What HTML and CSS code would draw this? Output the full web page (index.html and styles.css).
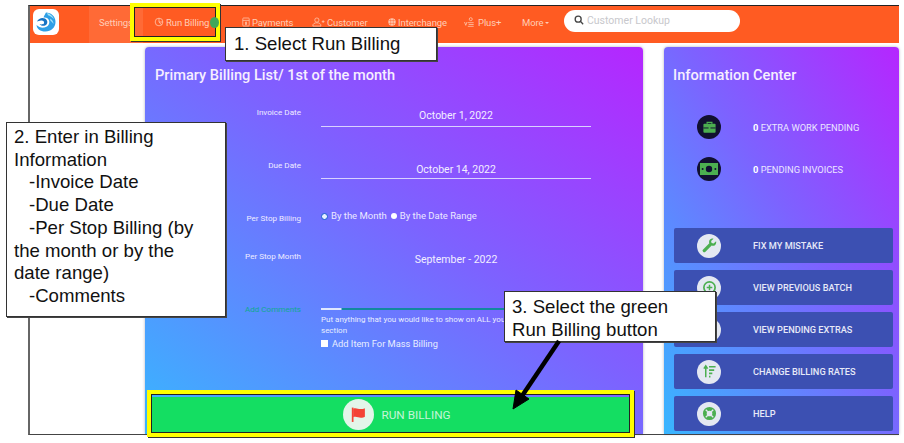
FILE: index.html
```html
<!DOCTYPE html>
<html lang="en">
<head>
<meta charset="UTF-8">
<meta name="viewport" content="width=device-width, initial-scale=1.0">
<title>Run Billing</title>
<link rel="stylesheet" href="styles.css">
</head>
<body>
<div class="frame">
    <header class="topbar">
        <div class="logo">
            <svg viewBox="0 0 26 26" width="26" height="26">
                <rect width="26" height="26" rx="6" fill="#fff"/>
                <path d="M13 3.500c5 0 9.500 4 9.500 9.500S18 22.500 12.500 22.500 4 20 3.500 16c2 2 5 3 8 2.500 4-.7 5.500-4 4.500-7-.7-2.500-3-3.500-5.500-3 1-2.500 2-4 2.500-5z" fill="#2f9fe6"/>
                <path d="M4 12.500c1.500-3 5-4.500 8-3 2.500 1.200 3 4 1.500 6-1.500 1.800-5 2-7-.5 2 .7 4 .5 4.500-.8.600-1.700-1-3-3-2.700-1.600.2-3 .5-4 1z" fill="#1673c4"/>
                <path d="M14 4c3 .5 6 3 7 6.500-2-2.500-4-3.500-6-4.200zM17 9.500c2 1 3.500 3 3.500 5.500-1-1.500-2-2.500-3-3.200z" fill="#a5e6f8"/>
            </svg>
        </div>
        <nav class="nav">
            <a class="nav-item nav-settings">Settings</a>
            <a class="nav-item nav-billing">
                <svg class="nav-icon" viewBox="0 0 12 12"><circle cx="6" cy="6" r="4.600"/><path d="M6 6V1.400M6 6h4.600M6 6l3 3.400"/></svg>
                Run Billing
            </a>
            <a class="nav-item nav-payments">
                <svg class="nav-icon nav-icon-narrow" viewBox="0 0 10 12"><rect x="1" y="1" width="8" height="10" rx="1"/><path d="M1 4h8M5 5.500v4.500M6.400 6.400H4.200v1.300h1.600v1.100H3.700"/></svg>
                Payments
            </a>
            <a class="nav-item nav-customer">
                <svg class="nav-icon nav-icon-wide" viewBox="0 0 16 12"><circle cx="6" cy="3.600" r="2.600"/><path d="M1 11c0-3 2-4 5-4s5 1 5 4zM12 5.500h3.400M13.700 3.800v3.400"/></svg>
                Customer
            </a>
            <a class="nav-item nav-interchange">
                <svg class="nav-icon nav-icon-narrow nav-icon-solid" viewBox="0 0 10 12"><circle cx="5" cy="6" r="4.600" stroke="none"/><path d="M.8 4.300h8.400M.8 7.700h8.400M3.400 1.500v9M6.600 1.500v9" stroke="#ff5b22" stroke-width="0.600"/></svg>
                Interchange
            </a>
            <a class="nav-item nav-plus">
                <svg class="nav-icon nav-icon-wide" viewBox="0 0 14 12"><circle cx="8.500" cy="2.600" r="1.800"/><path d="M5 6.800h7M6 9h6M5 11.200h7M1 6l1.500 4L4 6"/></svg>
                Plus+
            </a>
            <a class="nav-item nav-more">More <span class="caret"></span></a>
        </nav>
        <div class="search">
            <svg viewBox="0 0 12 12" width="10" height="10"><circle cx="5" cy="5" r="3.600"/><path d="M7.600 7.600L11 11"/></svg>
            <span>Customer Lookup</span>
        </div>
    </header>

    <div class="content">
        <section class="card billing">
            <h2 class="card-title">Primary Billing List/ 1st of the month</h2>

            <div class="row row-invoice">
                <label class="row-label">Invoice Date</label>
                <div class="field">October 1, 2022</div>
            </div>
            <div class="row row-due">
                <label class="row-label">Due Date</label>
                <div class="field">October 14, 2022</div>
            </div>
            <div class="row row-stop">
                <label class="row-label">Per Stop Billing</label>
                <div class="radios">
                    <span class="radio radio-on"></span>By the Month
                    <span class="radio"></span>By the Date Range
                </div>
            </div>
            <div class="row row-month">
                <label class="row-label">Per Stop Month</label>
                <div class="field field-plain">September - 2022</div>
            </div>
            <div class="row row-comments">
                <label class="row-label label-teal">Add Comments</label>
                <div class="comments">
                    <div class="comment-line"></div>
                    <p class="hint">Put anything that you would like to show on ALL your invoices in this<br>section</p>
                    <div class="mass"><span class="check"></span>Add Item For Mass Billing</div>
                </div>
            </div>

            <button class="run-btn">
                <span class="run-icon">
                    <svg viewBox="0 0 16 16" width="17" height="17"><path d="M2.500 1.500v13.500" stroke="#f44336" stroke-width="1.600"/><path d="M3 2.500c3-1.400 5 1 8 .3 1.300-.2 2.500-.6 3-.8v8c-1 .6-2.400 1-3.600 1-2.600.1-4.600-1.800-7.400-.5z" fill="#f44336"/></svg>
                </span>
                RUN BILLING
            </button>
        </section>

        <aside class="card info">
            <h2 class="card-title">Information Center</h2>

            <div class="stat stat-first">
                <span class="stat-icon">
                    <svg viewBox="0 0 16 16" width="15" height="15"><path d="M5.500 4V2.500h5V4" fill="none" stroke="#4caf50" stroke-width="1.400"/><rect x="1.500" y="4" width="13" height="9.500" rx="1" fill="#4caf50"/><rect x="1.500" y="8" width="13" height="1" fill="#101030"/><rect x="7" y="7.300" width="2" height="2.400" fill="#4caf50"/></svg>
                </span>
                <span class="stat-text"><b>0</b> EXTRA WORK PENDING</span>
            </div>
            <div class="stat">
                <span class="stat-icon">
                    <svg viewBox="0 0 18 14" width="18" height="14"><rect y="1" width="18" height="12" fill="#4caf50"/><circle cx="9" cy="7" r="3.200" fill="#101030"/><circle cx="2.600" cy="7" r="1" fill="#101030"/><circle cx="15.400" cy="7" r="1" fill="#101030"/></svg>
                </span>
                <span class="stat-text"><b>0</b> PENDING INVOICES</span>
            </div>

            <div class="actions">
                <a class="action">
                    <span class="action-icon">
                        <svg viewBox="0 0 16 16" width="15" height="15"><path d="M15 3.500l-2.600 2.400-2.200-.5-.5-2.200L12.300.8C10 0 7.500 1.500 7.500 4.200c0 .5.100 1 .3 1.400L1.200 12.200a1.700 1.700 0 0 0 2.500 2.500l6.600-6.600c2.800 1 5.600-1.400 4.700-4.600z" fill="#4caf50"/></svg>
                    </span>
                    FIX MY MISTAKE
                </a>
                <a class="action">
                    <span class="action-icon">
                        <svg viewBox="0 0 16 16" width="15" height="15"><circle cx="8" cy="8" r="6" fill="none" stroke="#4caf50" stroke-width="1.800"/><path d="M8 5v6M5 8h6" stroke="#4caf50" stroke-width="1.600"/></svg>
                    </span>
                    VIEW PREVIOUS BATCH
                </a>
                <a class="action">
                    <span class="action-icon"></span>
                    VIEW PENDING EXTRAS
                </a>
                <a class="action">
                    <span class="action-icon">
                        <svg viewBox="0 0 16 16" width="15" height="15"><path d="M4 14V3M2 5l2-3 2 3" fill="none" stroke="#4caf50" stroke-width="1.600"/><path d="M7.500 3h7M7.500 6.500h5.500M7.500 10h3.500M7.500 13.500h1.500" stroke="#4caf50" stroke-width="1.700"/></svg>
                    </span>
                    CHANGE BILLING RATES
                </a>
                <a class="action">
                    <span class="action-icon">
                        <svg viewBox="0 0 16 16" width="15" height="15"><circle cx="8" cy="8" r="5" fill="none" stroke="#4caf50" stroke-width="4"/><path d="M4 4l2.200 2.200M12 4L9.800 6.200M4 12l2.200-2.200M12 12L9.800 9.800" stroke="#e4e8f2" stroke-width="1.400"/></svg>
                    </span>
                    HELP
                </a>
            </div>
        </aside>
    </div>
</div>

<!-- annotations drawn on top of the screenshot -->
<div class="hl hl-nav"><span class="hl-dot"></span></div>
<div class="hl hl-btn"></div>
<div class="note note-1">1. Select Run Billing</div>
<div class="note note-2">
    2. Enter in Billing Information<br>
    <span class="sub">-Invoice Date</span><br>
    <span class="sub">-Due Date</span><br>
    <span class="sub">-Per Stop Billing (by</span> the month or by the date range)<br>
    <span class="sub">-Comments</span>
</div>
<div class="note note-3">3. Select the green<br>Run Billing button</div>
<svg class="arrow" viewBox="0 0 904 443" width="904" height="443">
    <path d="M559 341L522 396" stroke="#000" stroke-width="4.500"/>
    <path d="M513 409L516 390L529 399z" fill="#000" stroke="#000" stroke-width="1"/>
</svg>
</body>
</html>
```

FILE: styles.css
```css
* {
    box-sizing: border-box;
}
body {
    margin: 0;
    width: 904px;
    height: 443px;
    overflow: hidden;
    background: #fff;
    font-family: Roboto, "Liberation Sans", sans-serif;
    position: relative;
}
.frame {
    margin: 5px 0 0 28px;
    width: 871px;
    height: 430px;
    border-top: 1px solid #222;
    border-left: 2px solid #666;
    border-bottom: 1px solid #444;
    display: flex;
    flex-direction: column;
}

/* top bar */
.topbar {
    height: 37px;
    flex: none;
    background: #ff5b22;
    display: flex;
    align-items: flex-start;
    color: #ffcdb6;
}
.logo {
    width: 59px;
    padding: 3px 0 0 3px;
    height: 37px;
}
.logo svg {
    display: block;
}
.nav {
    display: flex;
    height: 37px;
    font-size: 9.500px;
    letter-spacing: -0.1px;
}
.nav-item {
    display: flex;
    align-items: center;
    gap: 2px;
    padding-bottom: 5px;
    white-space: nowrap;
}
.nav-settings {
    width: 54px;
    padding-left: 10px;
    background: #ff6a36;
}
.nav-billing {
    width: 97px;
    padding-left: 11px;
}
.nav-payments {
    width: 72px;
}
.nav-customer {
    width: 74px;
}
.nav-interchange {
    width: 77px;
}
.nav-plus {
    width: 59px;
}
.nav-more {
    width: 42px;
}
.nav-icon {
    width: 10px;
    height: 10px;
    fill: none;
    stroke: #ffcdb6;
    stroke-width: 0.900;
}
.nav-icon-wide {
    width: 13px;
}
.nav-icon-narrow {
    width: 8px;
    margin-left: 2px;
}
.nav-icon-solid {
    fill: #ffcdb6;
}
.caret {
    width: 0;
    height: 0;
    margin-top: 2px;
    border-left: 2.500px solid transparent;
    border-right: 2.500px solid transparent;
    border-top: 2.500px solid #ffcdb6;
}
.search {
    width: 176px;
    height: 22px;
    margin: 4px 0 0 0;
    background: #fff;
    border-radius: 11px;
    display: flex;
    align-items: center;
    gap: 3px;
    padding-left: 10px;
    padding-bottom: 2px;
    font-size: 10.500px;
    color: #c8c8cc;
}
.search svg {
    fill: none;
    stroke: #444;
    stroke-width: 1.600;
}

/* cards */
.content {
    flex: 1;
    min-height: 0;
    display: flex;
    padding: 4px 0 0 115px;
    gap: 21px;
}
.card {
    background: linear-gradient(to top right, #38b6ff, #7d62ff 55%, #b526ff);
    border-radius: 4px 4px 0 0;
    color: #fff;
    box-shadow: 0 0 3px rgba(60, 60, 90, 0.4);
    display: flex;
    flex-direction: column;
}
.billing {
    width: 498px;
}
.info {
    width: 235px;
}
.card-title {
    margin: 20px 0 0 10px;
    font-size: 14.600px;
    line-height: 17px;
    font-weight: 500;
    color: #f6eeff;
}
.info .card-title {
    margin-left: 9px;
}

/* form rows */
.row {
    display: grid;
    grid-template-columns: 156px 270px;
    column-gap: 20px;
}
.row-label {
    text-align: right;
    font-size: 8.100px;
    color: #f0ecff;
    line-height: 10px;
}
.label-teal {
    color: #10a890;
}
.field {
    height: 22px;
    border-bottom: 1px solid #d9d2ff;
    text-align: center;
    font-size: 10.500px;
    line-height: 22px;
    color: #f2eeff;
}
.row-invoice {
    margin-top: 21px;
}
.row-invoice .row-label {
    margin-top: 2px;
}
.row-due {
    margin-top: 31px;
}
.row-due .row-label {
    margin-top: 2px;
}
.row-due .field {
    height: 21px;
    line-height: 23px;
}
.row-stop {
    margin-top: 30px;
}
.row-stop .row-label {
    margin-top: 4px;
}
.radios {
    font-size: 9.500px;
    line-height: 12px;
    color: #ece8ff;
    display: flex;
    align-items: center;
    gap: 3px;
}
.radio {
    width: 6px;
    height: 6px;
    border-radius: 50%;
    background: #fff;
    margin-left: 1px;
}
.radio-on {
    width: 7px;
    height: 7px;
    background: #e8f0ff;
    border: 1.500px solid #1559d0;
    margin-left: 0;
}
.row-month {
    margin-top: 26px;
}
.row-month .row-label {
    margin-top: 2px;
}
.field-plain {
    border-bottom: 0;
}
.row-comments {
    margin-top: 37px;
}
.row-comments .row-label {
    margin-top: -4px;
}
.comment-line {
    height: 2px;
    background: linear-gradient(to right, #dfe8ff 20px, #12899e 21px);
}
.hint {
    margin: 4px 0 0 0;
    font-size: 8px;
    line-height: 11px;
    color: #e8eeff;
}
.mass {
    display: flex;
    align-items: center;
    gap: 4px;
    margin-top: 1px;
    font-size: 9.300px;
    line-height: 13px;
    color: #e8eeff;
}
.check {
    width: 7px;
    height: 7px;
    background: #fff;
}
.run-btn {
    margin: auto 13px 0 7px;
    height: 37px;
    padding: 0 0 2px 12px;
    background: #14de62;
    border: 0;
    color: #c4f5d8;
    font-family: inherit;
    font-size: 11.800px;
    display: flex;
    align-items: center;
    justify-content: center;
    gap: 7px;
}
.run-icon {
    width: 31px;
    height: 31px;
    border-radius: 50%;
    background: #e3f5ea;
    display: flex;
    align-items: center;
    justify-content: center;
}

/* info side */
.stat {
    display: flex;
    align-items: center;
    height: 24px;
    margin-top: 18px;
    padding-left: 33px;
    font-size: 9.300px;
    color: #ece6ff;
}
.stat-first {
    margin-top: 31px;
}
.stat-icon {
    width: 24px;
    height: 24px;
    border-radius: 50%;
    background: #111030;
    display: flex;
    align-items: center;
    justify-content: center;
    margin-right: 32px;
}
.stat-text b {
    font-weight: 700;
    color: #fff;
}
.actions {
    margin: auto 6px 3px 10px;
    display: flex;
    flex-direction: column;
    gap: 7px;
}
.action {
    height: 35px;
    background: #3c50b2;
    border-radius: 2px;
    display: flex;
    align-items: center;
    padding-left: 23px;
    font-size: 9.200px;
    font-weight: 500;
    color: #e6e9f8;
}
.action-icon {
    width: 24px;
    height: 24px;
    border-radius: 50%;
    background: #e4e8f2;
    margin-right: 32px;
    display: flex;
    align-items: center;
    justify-content: center;
}

/* annotations */
.hl {
    position: absolute;
    border: 5px solid #ffff00;
    outline: 1px solid #222;
    outline-offset: -5px;
    box-shadow: 1px 1px 0 #333;
}
.hl-nav {
    left: 130px;
    top: 3px;
    width: 90px;
    height: 38px;
}
.hl-dot {
    position: absolute;
    left: 75px;
    top: 9px;
    width: 9px;
    height: 11px;
    background: #3fa65a;
    border-radius: 50%;
}
.hl-btn {
    left: 147px;
    top: 390px;
    width: 487px;
    height: 47px;
}
.note {
    position: absolute;
    background: #fff;
    border: 1px solid #333;
    box-shadow: 1px 1px 0 #444;
    font-family: "Liberation Sans", Arial, sans-serif;
    font-size: 18.600px;
    line-height: 22.700px;
    color: #111;
}
.note-1 {
    left: 225px;
    top: 27px;
    width: 212px;
    height: 34px;
    padding: 5px 0 0 8px;
}
.note-2 {
    left: 6px;
    top: 122px;
    width: 220px;
    height: 195px;
    padding: 3px 12px 0 7px;
}
.sub {
    padding-left: 15px;
}
.note-3 {
    left: 504px;
    top: 291px;
    width: 212px;
    height: 51px;
    padding: 4px 0 0 7px;
}
.arrow {
    position: absolute;
    left: 0;
    top: 0;
}
```
